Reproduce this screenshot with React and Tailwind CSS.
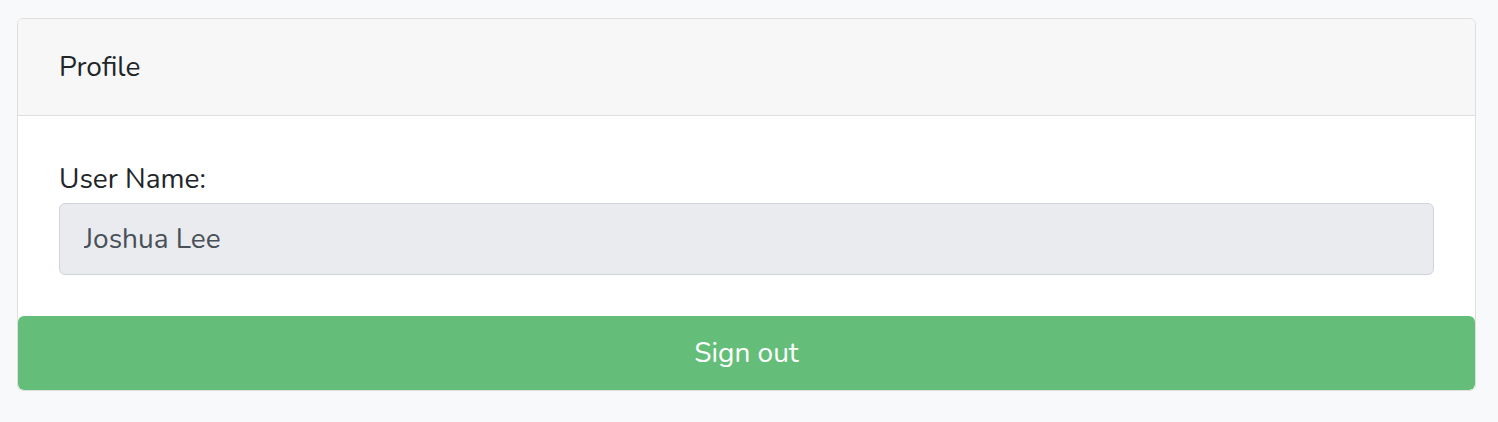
import React from 'react';

const Profile = () => {
  return (
    <div className="min-h-screen bg-[#f8f9fa] pt-[18px] pl-[17px] pr-[22px] font-['Nunito','Lato',sans-serif]">
      {/* Card */}
      <div className="bg-white border border-[#dfdfdf] rounded-[6px] overflow-hidden">
        <div className="bg-[#f7f7f7] border-b border-[#dfdfdf] px-[41px] h-[97px] flex items-center">
          <h2 className="text-[28px] text-[#212529] leading-[42px]">Profile</h2>
        </div>
        <div className="px-[41px] pt-[42px] pb-[41px]">
          <label className="block text-[28px] leading-[42px] text-[#212529] mb-[3px]">User Name:</label>
          <input
            type="text"
            value="Joshua Lee"
            disabled
            readOnly
            className="w-full h-[72px] bg-[#e9ebef] border border-[#ced4da] rounded-[6px] px-[24px] text-[28px] text-[#495057]"
          />
        </div>
        <button className="w-full h-[74px] bg-[#64be7a] text-white text-[28px] rounded-[6px] block">
          Sign out
        </button>
      </div>
    </div>
  );
};

export default function App() {
  return <Profile />;
}
